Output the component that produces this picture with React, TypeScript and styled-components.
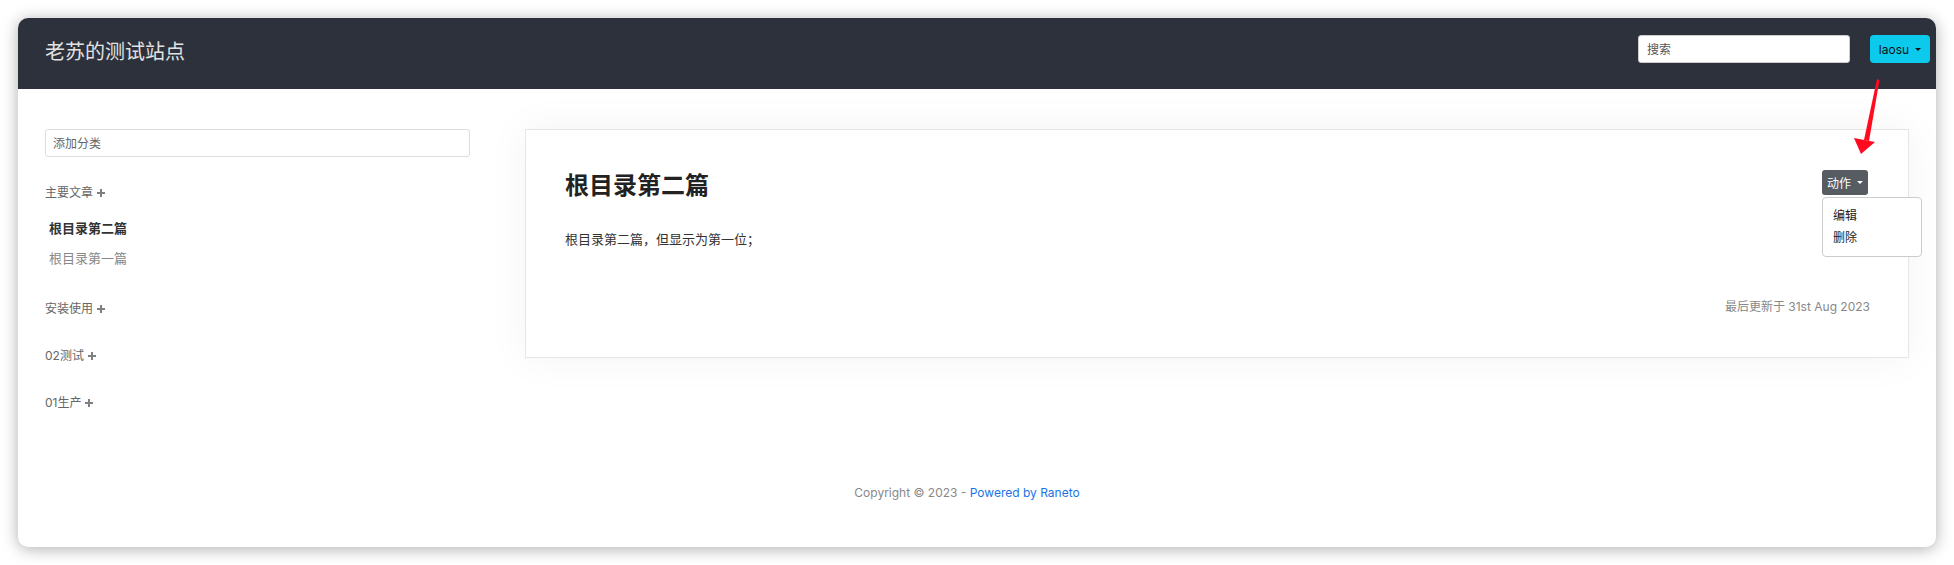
import React from "react";
import styled, { createGlobalStyle } from "styled-components";

const GlobalStyle = createGlobalStyle`
  html, body {
    margin: 0;
    padding: 0;
    background: #ffffff;
  }
  body {
    font-family: "Inter", "Noto Sans CJK SC", sans-serif;
    color: #333;
  }
  * {
    box-sizing: border-box;
  }
`;

const Page = styled.div`
  position: relative;
  width: 1954px;
  height: 565px;
  padding: 18px;
  overflow: hidden;
`;

const Window = styled.div`
  width: 1918px;
  height: 529px;
  border-radius: 10px;
  background: #fff;
  overflow: hidden;
  box-shadow: 0 2px 16px rgba(0, 0, 0, 0.32);
  display: flex;
  flex-direction: column;
`;

const Navbar = styled.header`
  height: 71px;
  flex: none;
  background: #2c313c;
  display: flex;
  align-items: flex-start;
  padding: 17px 6px 0 27px;
`;

const Brand = styled.div`
  font-size: 20px;
  line-height: 28px;
  color: #e2e2e2;
  margin-top: 3px;
  flex: 1;
`;

const SearchInput = styled.input`
  width: 212px;
  height: 28px;
  border: 1px solid #ccc;
  border-radius: 3px;
  padding: 0 8px;
  font-family: inherit;
  font-size: 12px;
  color: #333;
  background: #fff;
  margin-right: 20px;
  outline: none;
  &::placeholder {
    color: #555;
  }
`;

const Caret = styled.span<{ $color: string }>`
  display: inline-block;
  width: 0;
  height: 0;
  margin-left: 6px;
  border-left: 3px solid transparent;
  border-right: 3px solid transparent;
  border-top: 3px solid ${(p) => p.$color};
  vertical-align: middle;
`;

const UserButton = styled.button`
  width: 60px;
  height: 28px;
  border: none;
  border-radius: 4px;
  background: #0ccaec;
  color: #111;
  font-family: inherit;
  font-size: 12px;
  padding: 0;
  display: flex;
  align-items: center;
  justify-content: center;
`;

const Main = styled.div`
  display: flex;
  gap: 55px;
  padding: 40px 27px 0 27px;
`;

const Sidebar = styled.aside`
  width: 425px;
  flex: none;
`;

const CategoryInput = styled.input`
  width: 100%;
  height: 28px;
  border: 1px solid #ddd;
  border-radius: 3px;
  padding: 0 7px;
  font-family: inherit;
  font-size: 12px;
  outline: none;
  &::placeholder {
    color: #666;
  }
`;

const Category = styled.div<{ $empty?: boolean }>`
  margin-top: 28px;
  padding-bottom: ${(p) => (p.$empty ? "3px" : "0")};
`;

const CategoryTitle = styled.div`
  display: flex;
  align-items: center;
  gap: 4px;
  font-size: 12px;
  line-height: 16px;
  color: #666;
`;

const PlusMark = styled.span`
  position: relative;
  width: 8px;
  height: 8px;
  &::before,
  &::after {
    content: "";
    position: absolute;
    background: #808080;
  }
  &::before {
    left: 0;
    top: 3px;
    width: 8px;
    height: 2px;
  }
  &::after {
    left: 3px;
    top: 0;
    width: 2px;
    height: 8px;
  }
`;

const PageList = styled.ul`
  list-style: none;
  margin: 12px 0 8px 0;
  padding: 0 0 0 4px;
`;

const PageItem = styled.li<{ $active?: boolean }>`
  font-size: 13px;
  line-height: 30px;
  font-weight: ${(p) => (p.$active ? 700 : 400)};
  color: ${(p) => (p.$active ? "#333" : "#888")};
`;

const Card = styled.article`
  flex: 1;
  position: relative;
  height: 229px;
  border: 1px solid #e6e6e6;
  background: #fff;
  box-shadow: 0 0 40px rgba(0, 0, 0, 0.05);
  padding: 0 40px 0 39px;
  display: flex;
  flex-direction: column;
`;

const CardHead = styled.div`
  display: flex;
  justify-content: space-between;
  align-items: flex-start;
  padding-top: 40px;
`;

const Title = styled.h1`
  margin: 0;
  font-size: 24px;
  line-height: 32px;
  font-weight: 600;
  color: #222;
`;

const ActionWrap = styled.div`
  position: relative;
`;

const ActionButton = styled.button`
  width: 46px;
  height: 25px;
  border: none;
  border-radius: 3px;
  background: #565c62;
  color: #fff;
  font-family: inherit;
  font-size: 12px;
  padding: 0;
  display: flex;
  align-items: center;
  justify-content: center;
`;

const Menu = styled.div`
  position: absolute;
  left: 0;
  top: 27px;
  width: 100px;
  padding: 7px 0;
  background: #fff;
  border: 1px solid #ccc;
  border-radius: 4px;
  z-index: 2;
`;

const MenuItem = styled.div`
  padding: 0 10px;
  font-size: 12px;
  line-height: 22px;
  color: #222;
`;

const Body = styled.p`
  margin: 27px 0 0 0;
  font-size: 13px;
  line-height: 20px;
  color: #333;
`;

const Meta = styled.div`
  margin-top: auto;
  margin-bottom: 40px;
  text-align: right;
  font-size: 12px;
  line-height: 20px;
  color: #888;
  margin-right: -2px;
`;

const Footer = styled.footer`
  margin-top: auto;
  padding: 0 20px 46px 0;
  line-height: 16px;
  text-align: center;
  font-size: 12px;
  color: #888;
`;

const FooterLink = styled.a`
  color: #1a73e8;
  text-decoration: none;
`;

const Arrow = styled.svg`
  position: absolute;
  left: 1840px;
  top: 70px;
`;

const categories = [
  { name: "主要文章", pages: [{ title: "根目录第二篇", active: true }, { title: "根目录第一篇" }] },
  { name: "安装使用", pages: [] },
  { name: "02测试", pages: [] },
  { name: "01生产", pages: [] },
];

export default function App() {
  return (
    <Page>
      <GlobalStyle />
      <Window>
        <Navbar>
          <Brand>老苏的测试站点</Brand>
          <SearchInput placeholder="搜索" />
          <UserButton>
            laosu
            <Caret $color="#111" />
          </UserButton>
        </Navbar>
        <Main>
          <Sidebar>
            <CategoryInput placeholder="添加分类" />
            {categories.map((c) => (
              <Category key={c.name} $empty={c.pages.length === 0}>
                <CategoryTitle>
                  {c.name}
                  <PlusMark />
                </CategoryTitle>
                {c.pages.length > 0 && (
                  <PageList>
                    {c.pages.map((p) => (
                      <PageItem key={p.title} $active={p.active}>
                        {p.title}
                      </PageItem>
                    ))}
                  </PageList>
                )}
              </Category>
            ))}
          </Sidebar>
          <Card>
            <CardHead>
              <Title>根目录第二篇</Title>
              <ActionWrap>
                <ActionButton>
                  动作
                  <Caret $color="#fff" />
                </ActionButton>
                <Menu>
                  <MenuItem>编辑</MenuItem>
                  <MenuItem>删除</MenuItem>
                </Menu>
              </ActionWrap>
            </CardHead>
            <Body>根目录第二篇，但显示为第一位；</Body>
            <Meta>最后更新于 31st Aug 2023</Meta>
          </Card>
        </Main>
        <Footer>
          Copyright © 2023 - <FooterLink href="#">Powered by Raneto</FooterLink>
        </Footer>
      </Window>
      <Arrow width="50" height="95" viewBox="0 0 50 95">
        <polygon points="37,9 39.5,10 29,71 24,70" fill="#ff0a1e" />
        <polygon points="14,68 35,72 21,84" fill="#ff0a1e" />
      </Arrow>
    </Page>
  );
}
